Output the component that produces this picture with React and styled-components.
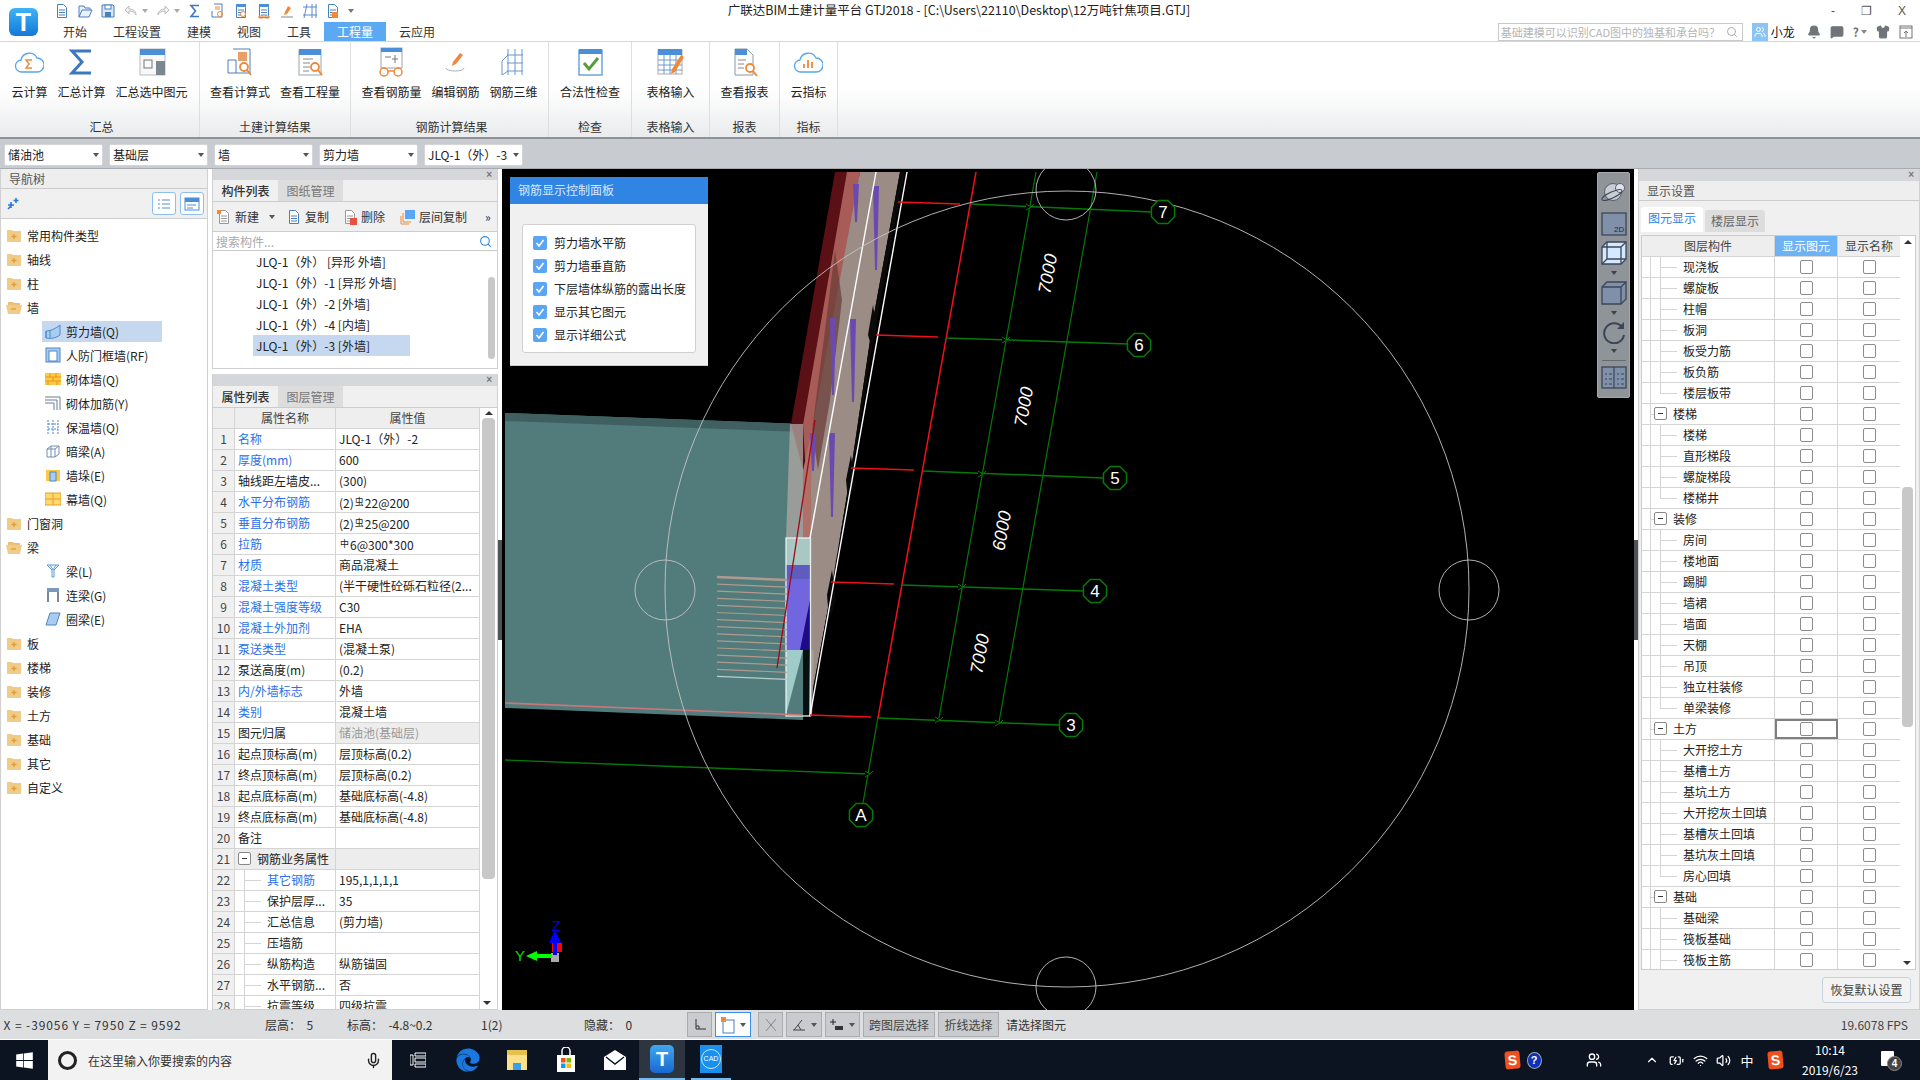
import React from "react";
import styled, { createGlobalStyle } from "styled-components";
import { Bell, Search, Mic, ChevronUp, Volume2, Wifi, BatteryCharging, Shirt, MessageSquare, Users } from "lucide-react";
import { FaEdge, FaWindows } from "react-icons/fa";

const Global = createGlobalStyle`
  html, body { margin: 0; width: 1920px; height: 1080px; overflow: hidden; background: #fff; }
  body { font: 12px "Noto Sans CJK SC", "Noto Sans", sans-serif; color: #222; }
  * { box-sizing: border-box; }
`;

const BLUE = "#4a8fd8";
const ORANGE = "#f0883a";

const Page = styled.div`
  width: 1920px;
  height: 1080px;
  display: flex;
  flex-direction: column;
`;

/* ---------- title + tabs ---------- */
const Header = styled.div`
  height: 42px;
  display: flex;
  border-bottom: 1px solid #d6d6d6;
  position: relative;
`;
const LogoBox = styled.div`
  width: 50px;
  padding: 8px 0 0 9px;
`;
const Logo = styled.div`
  width: 29px;
  height: 28px;
  border-radius: 6px;
  background: linear-gradient(#3fb4f5, #1478d8);
  color: #fff;
  font: bold 25px/28px "Liberation Sans", sans-serif;
  text-align: center;
`;
const HeaderBody = styled.div`
  flex: 1;
  display: flex;
  flex-direction: column;
`;
const TitleRow = styled.div`
  height: 23px;
  display: flex;
  align-items: center;
  position: relative;
  padding-left: 4px;
`;
const QuickIcons = styled.div`
  display: flex;
  align-items: center;
  gap: 7px;
`;
const Title = styled.div`
  position: absolute;
  left: 677px;
  top: 0;
  width: 464px;
  text-align: center;
  font-size: 12.5px;
  white-space: nowrap;
  color: #222;
`;
const WinControls = styled.div`
  margin-left: auto;
  display: flex;
  gap: 26px;
  padding-right: 14px;
  color: #555;
  font: 12px "Liberation Sans", sans-serif;
  align-items: center;
`;
const TabRow = styled.div`
  height: 19px;
  display: flex;
  align-items: stretch;
`;
const Tab = styled.div`
  padding: 0 13px;
  line-height: 19px;
  background: ${p => (p.$active ? "#5ba9f2" : "transparent")};
  color: ${p => (p.$active ? "#fff" : "#333")};
`;
const HelpArea = styled.div`
  margin-left: auto;
  display: flex;
  align-items: center;
  padding-right: 7px;
`;
const SearchBox = styled.div`
  width: 245px;
  height: 18px;
  border: 1px solid #c9c9c9;
  color: #b5b5b5;
  font-size: 11px;
  line-height: 16px;
  padding: 0 4px 0 2px;
  display: flex;
  justify-content: space-between;
  align-items: center;
  white-space: nowrap;
  overflow: hidden;
`;
const Avatar = styled.div`
  width: 16px;
  height: 18px;
  margin-left: 9px;
  background: #8cc4f4;
  display: flex;
  align-items: center;
  justify-content: center;
`;
const UserName = styled.span`
  margin: 0 12px 0 3px;
  color: #111;
`;
const HelpIcons = styled.div`
  display: flex;
  align-items: center;
  gap: 9px;
  color: #707478;
  > span { font-weight: 700; display: flex; align-items: center; }
`;

/* ---------- ribbon ---------- */
const Ribbon = styled.div`
  height: 97px;
  display: flex;
  background: linear-gradient(#fff 0, #fff 50%, #e9ebec 100%);
  border-bottom: 2px solid #8e9195;
`;
const Group = styled.div`
  width: ${p => p.$w}px;
  display: flex;
  flex-direction: column;
  border-right: 1px solid #dcdedf;
  height: 95px;
`;
const GroupButtons = styled.div`
  flex: 1;
  display: flex;
  justify-content: center;
  gap: 10px;
`;
const RibbonBtn = styled.div`
  display: flex;
  flex-direction: column;
  align-items: center;
  padding-top: 5px;
  white-space: nowrap;
  color: #222;
  > svg { height: 30px; margin-bottom: 6px; }
`;
const GroupLabel = styled.div`
  height: 22px;
  line-height: 24px;
  padding-left: ${p => p.$nudge || 0}px;
  text-align: center;
  color: #333;
`;

/* ---------- selector bar ---------- */
const SelectorBar = styled.div`
  height: 30px;
  background: #c8cbcf;
  display: flex;
  align-items: center;
  padding: 2px 0 0 4px;
  gap: 6px;
  border-bottom: 1px solid #a8abaf;
`;
const Select = styled.div`
  width: 99px;
  height: 22px;
  background: #fff;
  border: 1px solid #d5d5d5;
  border-radius: 2px;
  padding: 0 3px;
  line-height: 20px;
  display: flex;
  justify-content: space-between;
  align-items: center;
  white-space: nowrap;
  &::after {
    content: "";
    border: 3px solid transparent;
    border-top: 4px solid #555;
    border-bottom: 0;
  }
`;

/* ---------- main area ---------- */
const Main = styled.div`
  height: 841px;
  display: flex;
  background: #fff;
`;
const Nav = styled.div`
  width: 208px;
  display: flex;
  flex-direction: column;
  border: 1px solid #d0d0d0;
  border-top: 0;
`;
const PaneTitle = styled.div`
  height: 20px;
  background: #eee;
  border-bottom: 1px solid #ccc;
  line-height: 19px;
  padding-left: 8px;
  color: #555;
`;
const NavTools = styled.div`
  height: 30px;
  background: #f0f0f0;
  border-bottom: 1px solid #ccc;
  display: flex;
  align-items: center;
  padding: 0 3px 0 6px;
  gap: 4px;
`;
const ToolTile = styled.div`
  width: 24px;
  height: 23px;
  border: 1px solid #8cc0f0;
  border-radius: 3px;
  background: #fff;
  display: flex;
  align-items: center;
  justify-content: center;
  &:first-of-type { margin-left: auto; }
`;
const Tree = styled.div`
  flex: 1;
  padding-top: 4px;
  background: #fff;
`;
const TreeRow = styled.div`
  height: 24px;
  display: flex;
  align-items: center;
  gap: 5px;
  padding-left: ${p => (p.$child ? 44 : 5)}px;
  white-space: nowrap;
`;
const TreeLabel = styled.span`
  line-height: 21px;
  padding-right: 20px;
`;
const Highlighted = styled.div`
  width: 120px;
  height: 21px;
  margin-left: -3px;
  padding-left: 3px;
  background: #c6d8f0;
  display: flex;
  align-items: center;
  gap: 5px;
`;
const Gutter = styled.div`
  width: 4px;
  background: #fff;
  display: flex;
  flex-direction: column;
  justify-content: center;
  &::after {
    content: "";
    height: 100px;
    background: #4d5359;
  }
`;
const PlainGutter = styled.div`
  width: 4px;
`;
const Middle = styled.div`
  width: 286px;
  display: flex;
  flex-direction: column;
  gap: 5px;
`;
const Pane = styled.div`
  border: 1px solid #d0d0d0;
  border-top: 0;
  display: flex;
  flex-direction: column;
  height: ${p => p.$h}px;
  overflow: hidden;
`;
const CloseBar = styled.div`
  height: ${p => p.$h || 12}px;
  flex: none;
  background: #d5d7da;
  text-align: right;
  padding-right: 5px;
  color: #777;
  font: bold 10px/11px "Liberation Sans", sans-serif;
`;
const TabStrip = styled.div`
  height: 22px;
  flex: none;
  display: flex;
  background: #f0f0f0;
  border-bottom: 1px solid #ccc;
`;
const PaneTab = styled.div`
  width: 65px;
  text-align: center;
  line-height: 21px;
  font-weight: ${p => (p.$active ? 500 : 400)};
  background: ${p => (p.$active ? "#f0f0f0" : "#ddd")};
  color: ${p => (p.$active ? "#333" : "#777")};
`;
const PaneTools = styled.div`
  height: 30px;
  flex: none;
  display: flex;
  align-items: center;
  background: #f0f0f0;
  border-bottom: 1px solid #ccc;
  padding-left: 3px;
  color: #333;
`;
const ToolBtn = styled.div`
  display: flex;
  align-items: center;
  gap: 3px;
  margin-right: ${p => p.$gap}px;
  white-space: nowrap;
`;
const Caret = styled.span`
  border: 3px solid transparent;
  border-top: 4px solid ${p => p.$c || "#555"};
  border-bottom: 0;
  margin-left: ${p => p.$ml || 0}px;
  display: inline-block;
`;
const FindRow = styled.div`
  height: 19px;
  flex: none;
  display: flex;
  justify-content: space-between;
  align-items: center;
  padding: 0 5px 0 3px;
  color: #aaa;
  border-bottom: 1px solid #ccc;
`;
const ListBody = styled.div`
  flex: 1;
  display: flex;
`;
const ListItems = styled.div`
  flex: 1;
  padding: 0 0 0 40px;
`;
const ListItem = styled.div`
  width: 157px;
  height: 21px;
  line-height: 21px;
  padding-left: 3px;
  white-space: pre;
  background: ${p => (p.$sel ? "#c6d8f0" : "transparent")};
`;
const ScrollTrack = styled.div`
  width: ${p => p.$w || 11}px;
  flex: none;
  display: flex;
  flex-direction: column;
  padding: ${p => p.$pt || 0}px 2px 0;
  position: relative;
`;
const ScrollThumb = styled.div`
  width: 100%;
  height: ${p => p.$h}px;
  margin-top: ${p => p.$mt || 0}px;
  background: #c8c8c8;
  border-radius: 4px;
`;
const Arrow = styled.div`
  border: 4px solid transparent;
  margin: 0 auto;
  ${p => (p.$down
    ? "border-top: 4px solid #333; border-bottom: 0; position: absolute; bottom: 4px; left: 3px;"
    : "border-bottom: 4px solid #333; border-top: 0; margin-bottom: 3px;")}
`;
const TableWrap = styled.div`
  flex: 1;
  display: flex;
  overflow: hidden;
`;
const Table = styled.div`
  flex: 1;
  overflow: hidden;
`;
const Row = styled.div`
  display: grid;
  grid-template-columns: ${p => p.$cols};
  height: 21px;
  line-height: 20px;
  border-bottom: 1px solid #d4d4d4;
`;
const HeadCell = styled.div`
  background: ${p => (p.$on ? "#6cb2f5" : "#eee")};
  color: ${p => (p.$on ? "#fff" : "#444")};
  text-align: center;
  border-right: 1px solid #d4d4d4;
`;
const NumCell = styled.div`
  background: #f0f0f0;
  text-align: center;
  color: #444;
  border-right: 1px solid #d4d4d4;
`;
const NameCell = styled.div`
  position: relative;
  padding-left: ${p => p.$pad}px;
  color: ${p => (p.$link ? "#2a6fe8" : "#222")};
  background: ${p => (p.$grey ? "#ededed" : "#fff")};
  border-right: 1px solid #d4d4d4;
  white-space: nowrap;
  overflow: hidden;
`;
const ValueCell = styled.div`
  padding-left: 3px;
  white-space: pre;
  overflow: hidden;
  color: ${p => (p.$dim ? "#999" : "#222")};
  background: ${p => (p.$grey ? "#ededed" : "#fff")};
  border-right: 1px solid #d4d4d4;
`;
const Small = styled.span`
  font-size: 9px;
  vertical-align: 3px;
  margin: 0 1px;
`;
const Guide = styled.span`
  position: absolute;
  left: ${p => p.$x}px;
  top: 0;
  width: 1px;
  height: ${p => (p.$half ? 11 : 21)}px;
  background: #d4d4d4;
`;
const GuideH = styled.span`
  position: absolute;
  left: ${p => p.$x}px;
  top: 10px;
  width: ${p => p.$w}px;
  height: 1px;
  background: #d4d4d4;
`;
const Toggle = styled.span`
  position: absolute;
  left: ${p => p.$x}px;
  top: 3px;
  width: 13px;
  height: 13px;
  border: 1px solid #888;
  border-radius: 2px;
  background: #fff;
  &::after {
    content: "";
    position: absolute;
    left: 3px;
    top: 5px;
    width: 5px;
    height: 1px;
    background: #333;
  }
`;
const Canvas = styled.div`
  width: 1132px;
  background: #000;
  position: relative;
  > svg { display: block; }
`;
const ControlPanel = styled.div`
  position: absolute;
  left: 8px;
  top: 8px;
  width: 198px;
  height: 189px;
  background: #f0f0f0;
  border-bottom: 1px solid #ccc;
`;
const PanelHead = styled.div`
  height: 27px;
  line-height: 26px;
  background: #2f84e4;
  color: #d8e8fa;
  padding-left: 8px;
`;
const PanelInner = styled.div`
  margin: 20px 12px 0;
  height: 129px;
  background: #fff;
  border: 1px solid #d0d0d0;
  border-radius: 3px;
  padding-top: 6px;
`;
const PanelRow = styled.div`
  height: 23px;
  display: flex;
  align-items: center;
  gap: 7px;
  padding-left: 10px;
  white-space: nowrap;
  color: #222;
`;
const CheckOn = styled.span`
  width: 14px;
  height: 14px;
  border-radius: 2px;
  background: #5ba5f5;
  color: #fff;
  display: flex;
  align-items: center;
  justify-content: center;
`;
const ViewTools = styled.div`
  position: absolute;
  left: 1095px;
  top: 3px;
  width: 33px;
  height: 226px;
  background: #8f9499;
  border: 1px solid #a4a8ac;
  border-radius: 2px;
  display: flex;
  flex-direction: column;
  align-items: center;
  padding-top: 7px;
`;
const ViewGap = styled.div`
  height: ${p => p.$h}px;
  flex: none;
`;
const ViewSep = styled.div`
  width: 24px;
  height: 1px;
  background: #666a6e;
  margin: 3px 0 4px;
`;
const ViewCaret = styled.span`
  border: 3px solid transparent;
  border-top: 4px solid #3c4048;
  border-bottom: 0;
  margin: ${p => p.$m || "6px 0"};
`;
const RightPane = styled.div`
  width: 282px;
  border: 1px solid #d0d0d0;
  border-top: 0;
  display: flex;
  flex-direction: column;
  background: #f0f0f0;
`;
const RightTabs = styled.div`
  height: 34px;
  flex: none;
  display: flex;
  align-items: flex-end;
  padding: 0 0 3px 2px;
  gap: 2px;
`;
const RightTab = styled.div`
  width: ${p => (p.$active ? 62 : 60)}px;
  height: ${p => (p.$active ? 25 : 22)}px;
  line-height: 22px;
  text-align: center;
  background: ${p => (p.$active ? "#fff" : "#ddd")};
  color: ${p => (p.$active ? "#2a86e8" : "#666")};
  border-radius: 3px 3px 0 0;
`;
const GridBox = styled.div`
  height: 735px;
  margin: 0 3px 0 2px;
  border: 1px solid #ccc;
  background: #fff;
  display: flex;
  overflow: hidden;
  flex: none;
`;
const CheckCell = styled.div`
  display: flex;
  align-items: center;
  justify-content: center;
  background: #fff;
  border-right: 1px solid #d4d4d4;
  outline: ${p => (p.$focus ? "2px solid #808080" : "none")};
  outline-offset: -2px;
  padding-bottom: 1px;
`;
const CheckOff = styled.span`
  width: 13px;
  height: 14px;
  border: 1px solid #8c8c8c;
  border-radius: 2px;
  display: block;
`;
const RightFoot = styled.div`
  flex: 1;
  display: flex;
  justify-content: flex-end;
  align-items: center;
  padding-right: 8px;
`;
const ResetBtn = styled.div`
  width: 89px;
  height: 26px;
  border: 1px solid #c8d2de;
  border-radius: 3px;
  background: #f3f3f3;
  text-align: center;
  line-height: 24px;
  color: #444;
`;

/* ---------- status bar ---------- */
const Status = styled.div`
  height: 30px;
  background: #dddee0;
  border-bottom: 1px solid #fff;
  display: flex;
  align-items: center;
  color: #333;
  white-space: nowrap;
`;
const StatusCell = styled.div`
  width: ${p => p.$w}px;
  margin-left: ${p => p.$ml || 0}px;
  letter-spacing: ${p => p.$ls || 0}px;
  white-space: pre;
  flex: none;
`;
const StatusBtns = styled.div`
  display: flex;
  gap: 3px;
  align-items: center;
`;
const StatusBtn = styled.div`
  width: ${p => p.$w}px;
  height: 25px;
  margin-left: ${p => p.$ml || 0}px;
  background: ${p => (p.$on ? "#fff" : "#c9cbce")};
  border: 1px solid ${p => (p.$on ? "#3b8fe8" : "#a9abae")};
  display: flex;
  align-items: center;
  justify-content: center;
  gap: 5px;
  color: #444;
`;
const Fps = styled.div`
  margin-left: auto;
  padding-right: 12px;
  color: #444;
`;

/* ---------- taskbar ---------- */
const Taskbar = styled.div`
  height: 40px;
  background: #0b1420;
  display: flex;
  align-items: center;
  color: #fff;
`;
const StartBtn = styled.div`
  width: 48px;
  display: flex;
  justify-content: center;
  color: #fff;
`;
const TaskSearch = styled.div`
  width: 344px;
  height: 40px;
  background: #f2f2f2;
  color: #333;
  display: flex;
  align-items: center;
  padding: 0 10px;
  gap: 11px;
`;
const MicSlot = styled.span`
  margin-left: auto;
  display: flex;
`;
const Ring = styled.span`
  width: 19px;
  height: 19px;
  border: 3px solid #222;
  border-radius: 50%;
`;
const TaskSlot = styled.div`
  width: ${p => p.$w || 49}px;
  height: 40px;
  display: flex;
  align-items: center;
  justify-content: center;
  background: ${p => (p.$active ? "#2c3540" : "transparent")};
  border-bottom: ${p => (p.$open ? "2px solid #76b9ed" : "0")};
`;
const TaskApp = styled.div`
  width: 24px;
  height: 28px;
  border-radius: 5px;
  background: linear-gradient(#3fa8f0, #1868d0);
  color: #fff;
  font: bold 20px/28px "Liberation Sans", sans-serif;
  text-align: center;
`;
const CadApp = styled.div`
  width: 22px;
  height: 28px;
  background: #1890f0;
  display: flex;
  align-items: center;
  justify-content: center;
`;
const CadRing = styled.div`
  width: 20px;
  height: 20px;
  border: 1px solid #cfe8ff;
  border-radius: 50%;
  color: #fff;
  font: 7px/18px "Liberation Sans", sans-serif;
  text-align: center;
`;
const Tray = styled.div`
  margin-left: auto;
  display: flex;
  align-items: center;
  height: 40px;
`;
const TrayItem = styled.div`
  width: ${p => p.$w}px;
  margin-left: ${p => p.$ml || 0}px;
  display: flex;
  justify-content: center;
  align-items: center;
  font-size: ${p => p.$fs || 12}px;
`;
const Sogou = styled.span`
  width: 15px;
  height: 18px;
  border-radius: 3px;
  background: #f0501e;
  color: #fff;
  font: bold 14px/18px "Liberation Sans", sans-serif;
  text-align: center;
  transform: rotate(-5deg);
`;
const HelpDot = styled.span`
  width: 15px;
  height: 17px;
  border-radius: 50%;
  background: #1030b8;
  border: 1px solid #9aa;
  color: #fff;
  font: bold 11px/15px "Liberation Sans", sans-serif;
  text-align: center;
`;
const Clock = styled.div`
  width: 76px;
  text-align: center;
  line-height: 20px;
  font-size: 12px;
`;
const Badge = styled.span`
  position: absolute;
  right: -8px;
  bottom: -5px;
  width: 15px;
  height: 15px;
  border-radius: 50%;
  background: #444;
  border: 1px solid #888;
  color: #fff;
  font: bold 10px/13px "Liberation Sans", sans-serif;
  text-align: center;
`;
const Notice = styled.div`
  position: relative;
  width: 13px;
  height: 15px;
  background: #fff;
  margin: 0 26px 4px 0;
  border-radius: 1px;
`;

/* ---------- icons ---------- */
const Svg = ({ w = 16, h = 16, children }) => (
  <svg width={w} height={h} viewBox={`0 0 ${w} ${h}`} fill="none">{children}</svg>
);

const Doc = ({ c = "#4a7fb8", head }) => (
  <>
    <path d="M3.5 1.5h6l3 3v10h-9z" stroke={c} fill="#fff" />
    {head && <rect x="3" y="1" width="10" height="3" fill={BLUE} />}
    <path d="M5 7h6M5 9.5h6M5 12h6" stroke={c} />
  </>
);
const qaIcons = [
  <Svg key="a"><Doc /></Svg>,
  <Svg key="b"><path d="M2 14V3h5l1 2h5v2M2 14l3-7h10l-3 7z" stroke="#4a7fb8" fill="#eaf2fa" /></Svg>,
  <Svg key="c"><path d="M2 2h11l1 1v11H2z" stroke="#4a7fb8" fill="#d8e8f6" /><rect x="5" y="2" width="6" height="4" fill="#fff" stroke="#4a7fb8" /><rect x="5" y="9" width="6" height="5" fill="#4a7fb8" /></Svg>,
  <Svg key="d"><path d="M13 12c0-4-3-6-7-6V3L2 7l4 4V8c3 0 6 1 7 4z" stroke="#bbb" fill="#f2f2f2" /></Svg>,
  <Caret key="d2" $c="#aaa" $ml={-4} />,
  <Svg key="e"><path d="M3 12c0-4 3-6 7-6V3l4 4-4 4V8c-3 0-6 1-7 4z" stroke="#bbb" fill="#f2f2f2" /></Svg>,
  <Caret key="e2" $c="#aaa" $ml={-4} />,
  <Svg key="f"><path d="M12 2.500H4l4.500 5.500L4 13.500h8" stroke="#3b78c0" strokeWidth="1.6" /></Svg>,
  <Svg key="g"><path d="M4 1h8v13H2" stroke="#4a7fb8" /><path d="M5 4h5M5 6h5" stroke={ORANGE} /><circle cx="10" cy="11" r="2.500" stroke={ORANGE} /><path d="M2 8v6" stroke="#4a7fb8" /></Svg>,
  <Svg key="h"><Doc head /><circle cx="10" cy="11" r="2.500" stroke={ORANGE} fill="#fff" /></Svg>,
  <Svg key="i"><Doc head /><path d="M3 13h4v2H3zM9 13h4v2H9z" stroke={ORANGE} /></Svg>,
  <Svg key="j"><path d="M9 3l3 2-4 6-3 1 1-3z" fill={ORANGE} /><path d="M2 14h12" stroke="#888" /></Svg>,
  <Svg key="k"><path d="M1 4h14M1 12h14M5 1l-3 14M10 1v14M14 1v14" stroke="#5a8cc8" /></Svg>,
  <Svg key="l"><Doc /><rect x="7" y="9" width="6" height="6" fill={ORANGE} /></Svg>,
  <Caret key="l2" $c="#777" />,
];

const RI = ({ children }) => <svg width="30" height="30" viewBox="0 0 30 30" fill="none">{children}</svg>;
const Cloud = () => <path d="M8 25a6 6 0 0 1-1-12 8.500 8.500 0 0 1 16-2 7 7 0 0 1 0 14z" stroke="#58a6ea" strokeWidth="1.3" fill="#fff" />;
const HeadDoc = () => (
  <>
    <rect x="4" y="3" width="22" height="25" stroke="#9aa4ae" fill="#fff" />
    <rect x="4" y="2" width="22" height="6" fill={BLUE} />
  </>
);
const Lens = ({ x = 21, y = 21 }) => (
  <>
    <circle cx={x} cy={y} r="4" stroke={ORANGE} strokeWidth="1.8" fill="#fff" />
    <path d={`M${x + 3} ${y + 3}l4 5`} stroke={ORANGE} strokeWidth="2" />
  </>
);
const ribbonIcons = {
  cloudSum: <RI><Cloud /><path d="M18 13h-6l3 4-3 4h6" stroke={ORANGE} strokeWidth="1.4" /></RI>,
  sigma: <RI><path d="M25 4H6l10 11L6 26h19" stroke="#3b78c0" strokeWidth="3" /></RI>,
  sumSel: <RI><rect x="3" y="2" width="25" height="26" stroke="#bbb" fill="#f8f8f8" /><rect x="3" y="2" width="25" height="6" fill={BLUE} /><rect x="7" y="13" width="8" height="8" stroke="#777" /><rect x="19" y="14" width="9" height="14" fill="#7c8690" /></RI>,
  calcDoc: <RI><path d="M8 2h17v24H3V13h8v13" stroke="#4a7fb8" /><rect x="13" y="5" width="9" height="9" fill="#e8a068" /><Lens x={19} y={20} /></RI>,
  qtyDoc: <RI><HeadDoc /><path d="M8 12h10M8 16h7M8 20h7M8 24h6" stroke="#888" /><Lens x={20} y={20} /></RI>,
  rebar: <RI><rect x="5" y="1" width="21" height="20" stroke="#9aa4ae" fill="#fff" /><rect x="5" y="1" width="21" height="4" fill={BLUE} /><path d="M9 10h6M19 8v8M16 12h6" stroke="#777" /><circle cx="8" cy="25" r="4" stroke={ORANGE} strokeWidth="1.5" /><circle cx="22" cy="25" r="4" stroke={ORANGE} strokeWidth="1.5" /><path d="M12 24h6" stroke={ORANGE} strokeWidth="1.5" /></RI>,
  editBar: <RI><path d="M6 21c0 4 18 4 18 0" stroke="#b0b0b0" /><path d="M20 6l3 2-7 9-4 2 1-4z" fill={ORANGE} /></RI>,
  rebar3d: <RI><path d="M9 2v26M16 2v26M23 2v26M8 8h16M8 16h16M8 24h16M3 14l6-6M3 28l6-4M3 14v14" stroke="#6b96c8" /></RI>,
  check: <RI><rect x="4" y="3" width="23" height="25" stroke={BLUE} strokeWidth="1.2" fill="#fff" /><rect x="4" y="2" width="23" height="5" fill={BLUE} /><path d="M9 16l5 6 9-11" stroke="#5a9a40" strokeWidth="3" /></RI>,
  sheet: <RI><rect x="3" y="3" width="24" height="24" stroke="#aaa" fill="#fff" /><rect x="3" y="2" width="24" height="6" fill={BLUE} /><path d="M3 13h24M3 18h24M3 23h24M9 8v19M15 8v19M21 8v19" stroke="#6a9ad0" /><path d="M26 8l3 2-9 15-4 2 1-5z" fill={ORANGE} /></RI>,
  report: <RI><path d="M6 2h12l6 6v20H6z" stroke="#8a98a8" fill="#fff" /><path d="M6 2h12v6H6z" fill={BLUE} /><path d="M9 13h8M9 17h6M9 21h6" stroke="#888" /><Lens x={21} y={21} /></RI>,
  cloudBar: <RI><Cloud /><path d="M11 21v-4M15 21v-8M19 21v-6" stroke={ORANGE} strokeWidth="1.8" /></RI>,
};

const I = ({ children }) => <svg width="16" height="16" viewBox="0 0 16 16" fill="none">{children}</svg>;
const FolderClosed = () => <I><path d="M1 3h5l1 1h8v11H1z" fill="#f0cc88" /><path d="M8 7v5M5.500 9.500h5" stroke="#d8a040" strokeWidth="1.4" /></I>;
const FolderOpen = () => <I><path d="M2 3h5l1 1h6v2H2z" fill="#e8c078" /><path d="M0 6h16l-2 9H2z" fill="#f0cc88" /><path d="M5 10h5" stroke="#d8a040" strokeWidth="1.4" /></I>;
const navIcons = {
  shear: <I><path d="M1 8c4 0 9-2 14-6v10c-4 3-9 4-14 3z" fill="#a8cdf0" stroke="#4a88c8" /><path d="M1 8v7M5 7v8" stroke="#4a88c8" /></I>,
  door: <I><rect x="1" y="1" width="14" height="14" fill="#a8cdf0" stroke="#4a88c8" /><rect x="4" y="4" width="8" height="10" fill="#fff" stroke="#4a88c8" /></I>,
  brick: <I><rect x="0" y="2" width="16" height="12" fill="#fdc848" /><path d="M0 6h16M0 10h16M5 2v4M11 2v4M8 6v4M3 10v4M12 10v4" stroke="#e89810" /></I>,
  rein: <I><path d="M0 2h15v13M0 5h12v10M0 8h9v7" stroke="#6a7f98" /></I>,
  insul: <I><path d="M3 1v14M8 1v14M13 1v14" stroke="#4a88c8" strokeDasharray="2 1" /><path d="M3 5h10M3 10h10" stroke="#4a88c8" strokeDasharray="2 1" /></I>,
  dark: <I><path d="M2 6l4-3h8v8l-4 3H2zM2 6h8v8M10 6l4-3M6 3v11" stroke="#7090b0" /></I>,
  pier: <I><rect x="1" y="3" width="14" height="11" fill="#fdc848" /><rect x="5" y="5" width="6" height="9" fill="#a8cdf0" stroke="#4a88c8" /></I>,
  curtain: <I><rect x="0" y="2" width="16" height="12" fill="#fdd870" stroke="#e8a020" /><path d="M0 8h16M8 2v12" stroke="#e8a020" /></I>,
  beam: <I><path d="M2 2h12l-5 5v7H7V7z" stroke="#5a9ad8" /><path d="M5 2l3 5 3-5" stroke="#5a9ad8" /></I>,
  link: <I><rect x="2" y="1" width="12" height="4" fill="#7a9ab8" /><path d="M3 5v10M13 5v10" stroke="#7a8a98" strokeWidth="2" /></I>,
  ring: <I><path d="M5 2h10l-4 12H1z" fill="#a8cdf0" stroke="#4a88c8" /></I>,
};

const navTree = [
  { t: "常用构件类型" }, { t: "轴线" }, { t: "柱" }, { t: "墙", open: true },
  { t: "剪力墙(Q)", i: "shear", sel: true }, { t: "人防门框墙(RF)", i: "door" }, { t: "砌体墙(Q)", i: "brick" },
  { t: "砌体加筋(Y)", i: "rein" }, { t: "保温墙(Q)", i: "insul" }, { t: "暗梁(A)", i: "dark" },
  { t: "墙垛(E)", i: "pier" }, { t: "幕墙(Q)", i: "curtain" }, { t: "门窗洞" }, { t: "梁", open: true },
  { t: "梁(L)", i: "beam" }, { t: "连梁(G)", i: "link" }, { t: "圈梁(E)", i: "ring" },
  { t: "板" }, { t: "楼梯" }, { t: "装修" }, { t: "土方" }, { t: "基础" }, { t: "其它" }, { t: "自定义" },
];

const listItems = [
  "JLQ-1（外） [异形 外墙]", "JLQ-1（外）-1 [异形 外墙]", "JLQ-1（外）-2 [外墙]", "JLQ-1（外）-4 [内墙]", "JLQ-1（外）-3 [外墙]",
];

const Bar = ({ g, v }) => <>({g})<Small>虫</Small>{v}</>;
const props = [
  ["名称", 1, "JLQ-1（外）-2"], ["厚度(mm)", 1, "600"], ["轴线距左墙皮...", 0, "(300)"],
  ["水平分布钢筋", 1, <Bar g="2" v="22@200" />], ["垂直分布钢筋", 1, <Bar g="2" v="25@200" />],
  ["拉筋", 1, <><Small>中</Small>6@300*300</>], ["材质", 1, "商品混凝土"], ["混凝土类型", 1, "(半干硬性砼砾石粒径(2..."],
  ["混凝土强度等级", 1, "C30"], ["混凝土外加剂", 1, "EHA"], ["泵送类型", 1, "(混凝土泵)"], ["泵送高度(m)", 0, "(0.2)"],
  ["内/外墙标志", 1, "外墙"], ["类别", 1, "混凝土墙"], ["图元归属", 0, "储油池(基础层)", "dim"],
  ["起点顶标高(m)", 0, "层顶标高(0.2)"], ["终点顶标高(m)", 0, "层顶标高(0.2)"],
  ["起点底标高(m)", 0, "基础底标高(-4.8)"], ["终点底标高(m)", 0, "基础底标高(-4.8)"], ["备注", 0, ""],
  ["钢筋业务属性", 0, "", "group"], ["其它钢筋", 1, "195,1,1,1,1", "child"], ["保护层厚...", 0, "35", "child"],
  ["汇总信息", 0, "(剪力墙)", "child"], ["压墙筋", 0, "", "child"], ["纵筋构造", 0, "纵筋锚固", "child"],
  ["水平钢筋...", 0, "否", "child"], ["抗震等级", 0, "四级抗震", "child"],
];

const PROP_COLS = "22px 101px 1fr";
const LAYER_COLS = "133px 63px 63px";

const layers = [
  ["现浇板"], ["螺旋板"], ["柱帽"], ["板洞"], ["板受力筋"], ["板负筋"], ["楼层板带", "last"],
  ["楼梯", "parent"], ["楼梯"], ["直形梯段"], ["螺旋梯段"], ["楼梯井", "last"],
  ["装修", "parent"], ["房间"], ["楼地面"], ["踢脚"], ["墙裙"], ["墙面"], ["天棚"], ["吊顶"], ["独立柱装修"], ["单梁装修", "last"],
  ["土方", "parent"], ["大开挖土方"], ["基槽土方"], ["基坑土方"], ["大开挖灰土回填"], ["基槽灰土回填"], ["基坑灰土回填"], ["房心回填", "last"],
  ["基础", "parent"], ["基础梁"], ["筏板基础"], ["筏板主筋"],
];

const ribbon = [
  { w: 200, label: "汇总", nudge: 4, items: [["云计算", "cloudSum"], ["汇总计算", "sigma"], ["汇总选中图元", "sumSel"]] },
  { w: 151, label: "土建计算结果", items: [["查看计算式", "calcDoc"], ["查看工程量", "qtyDoc"]] },
  { w: 198, label: "钢筋计算结果", nudge: 4, items: [["查看钢筋量", "rebar"], ["编辑钢筋", "editBar"], ["钢筋三维", "rebar3d"]] },
  { w: 83, label: "检查", items: [["合法性检查", "check"]] },
  { w: 78, label: "表格输入", items: [["表格输入", "sheet"]] },
  { w: 70, label: "报表", items: [["查看报表", "report"]] },
  { w: 58, label: "指标", items: [["云指标", "cloudBar"]] },
];

/* ---------- canvas drawing, in page coordinates ---------- */
const GREEN = "#067a06";
const RED = "#f01018";
const CIRCLE = "#c4c4c4";
const hatchYs = Array.from({ length: 15 }, (_, i) => 577 + i * 7.1);

const Octo = ({ x, y, t }) => {
  const pts = Array.from({ length: 8 }, (_, i) => {
    const a = Math.PI / 8 + (i * Math.PI) / 4;
    return `${x + 12.5 * Math.cos(a)},${y + 12.5 * Math.sin(a)}`;
  }).join(" ");
  return (
    <>
      <polygon points={pts} fill="#000" stroke={GREEN} strokeWidth="1.5" />
      <text x={x} y={y + 6} textAnchor="middle" fill="#fff" fontSize="17" fontFamily="Liberation Sans">{t}</text>
    </>
  );
};
const Dim = ({ x, y, t }) => (
  <text x={x} y={y} transform={`rotate(-80 ${x} ${y})`} textAnchor="middle" fill="#fff" fontSize="18" fontStyle="italic" fontFamily="Liberation Sans" dominantBaseline="middle">{t}</text>
);
const L = ({ p, c, w = 1.2 }) => <line x1={p[0]} y1={p[1]} x2={p[2]} y2={p[3]} stroke={c} strokeWidth={w} />;

const Drawing = () => (
  <svg width="1132" height="841" viewBox="502 169 1132 841">
    {/* slab */}
    <polygon points="505,413 803,424 803,720 505,708" fill="#527b7b" />
    <polygon points="505,413 803,424 803,432 505,421" fill="#3f5f60" />
    {/* wall */}
    <polygon points="835,172 791,424 803,470 856,172" fill="#5a1014" />
    <polygon points="847,172 803,425 810,540 860,172" fill="#a85c58" />
    <polygon points="860,172 900,172 873,320 851,470 832,586 808,716 804,700 810,540 812,430 836,300" fill="#9c8c86" />
    <polygon points="900,172 905,172 875,330 851,480 836,560 812,716 808,716 832,586 851,470 873,320" fill="#0a0a0a" />
    <polygon points="873,305 877,330 871,345 868,335" fill="#0a0a0a" />
    <polygon points="851,455 855,485 848,500 846,480" fill="#0a0a0a" />
    <polygon points="832,570 836,600 829,620 827,595" fill="#0a0a0a" />
    <polygon points="790,424 803,424 803,540 786,540" fill="#b0a8a4" opacity="0.75" />
    <polygon points="803,470 812,430 810,540 803,540" fill="#b07068" />
    <polygon points="825,330 835,250 842,300 830,400 818,470 812,430" fill="#6a3a34" opacity="0.7" />
    {[[876, 186, 270], [856, 184, 222], [853, 319, 402], [833, 318, 395], [832, 433, 517], [813, 433, 471]].map(([x, y1, y2]) => (
      <polygon key={x + y1} points={`${x - 3},${y1} ${x + 3},${y1} ${x + 1},${y2} ${x - 1},${y2}`} fill="#6a4ab0" />
    ))}
    {/* end box */}
    <rect x="786" y="538" width="24" height="27" fill="#a9c8c4" />
    <rect x="785" y="565" width="25" height="14" fill="#5f5cc0" />
    <rect x="785" y="579" width="25" height="71" fill="#7265e0" />
    <polygon points="810,600 810,650 800,650" fill="#1c0a88" />
    <polygon points="786,650 803,650 786,715" fill="#9fcbc8" />
    <rect x="803" y="650" width="7" height="66" fill="#06100f" />
    <polygon points="810,650 814,650 812,716 809,716" fill="#a89c96" />
    <rect x="786" y="538" width="24.5" height="178" stroke="#e8f0f0" strokeWidth="1.3" fill="none" />
    {/* hatch */}
    {hatchYs.map((y, i) => (
      <line key={y} x1="717" y1={y} x2="787" y2={y + 3} stroke={i === 14 ? "#b8d0cc" : "#b09a90"} strokeWidth={i === 0 ? 2.4 : 1.2} />
    ))}
    <L p={[505, 703, 802, 715]} c="#c8787a" w={1.6} />
    <L p={[815, 420, 777, 668]} c="#a00818" w={1.3} />
    <L p={[876, 172, 810, 538]} c="#fff" w={1.4} />
    <L p={[907, 172, 810, 716]} c="#fff" w={1.4} />
    {/* grid */}
    <L p={[976, 172, 878, 718]} c={RED} w={1.5} />
    <L p={[878, 717, 863, 803]} c={GREEN} />
    <L p={[1036, 172, 939, 718]} c={GREEN} />
    <L p={[1097, 172, 999, 722]} c={GREEN} />
    <L p={[971, 204, 1152, 212]} c={GREEN} w={1.5} />
    <L p={[946, 338, 1128, 344]} c={GREEN} w={1.5} />
    <L p={[923, 471, 1103, 478]} c={GREEN} w={1.5} />
    <L p={[902, 585, 1084, 591]} c={GREEN} w={1.5} />
    <L p={[878, 718, 1060, 725]} c={GREEN} w={1.5} />
    <L p={[505, 760, 868, 774]} c={GREEN} w={1.4} />
    <L p={[898, 202, 960, 204]} c={RED} w={1.6} />
    <L p={[876, 335, 938, 337]} c={RED} w={1.6} />
    <L p={[851, 468, 914, 470]} c={RED} w={1.6} />
    <L p={[831, 582, 894, 584]} c={RED} w={1.6} />
    <L p={[810, 715, 871, 717]} c={RED} w={1.6} />
    {[[1030, 207], [1006, 340], [982, 474], [962, 587], [939, 720], [999, 723], [869, 774]].map(([x, y]) => (
      <path key={x} d={`M${x - 4} ${y - 3}l5 3l-5 3M${x + 4} ${y - 3}l-3 3`} stroke={GREEN} strokeWidth="1" />
    ))}
    {/* circles */}
    <ellipse cx="1067" cy="589" rx="402" ry="398" stroke={CIRCLE} strokeWidth="0.9" fill="none" />
    <circle cx="665" cy="590" r="30" stroke={CIRCLE} strokeWidth="0.9" fill="none" />
    <circle cx="1469" cy="590" r="30" stroke={CIRCLE} strokeWidth="0.9" fill="none" />
    <circle cx="1066" cy="190" r="30" stroke={CIRCLE} strokeWidth="0.9" fill="none" />
    <circle cx="1066" cy="987" r="30" stroke={CIRCLE} strokeWidth="0.9" fill="none" />
    <Dim x={1049} y={274} t="7000" />
    <Dim x={1025} y={407} t="7000" />
    <Dim x={1003} y={531} t="6000" />
    <Dim x={981} y={654} t="7000" />
    <Octo x={1163} y={212} t="7" />
    <Octo x={1139} y={345} t="6" />
    <Octo x={1115} y={478} t="5" />
    <Octo x={1095} y={591} t="4" />
    <Octo x={1071} y={725} t="3" />
    <Octo x={861} y={815} t="A" />
    {/* axis */}
    <rect x="552" y="943" width="10" height="9" fill="#f00" />
    <rect x="551" y="953" width="8" height="9" fill="#aaa" />
    <polygon points="555,930 561,943 557,943 557,955 553,955 553,943 549,943" fill="#00f" />
    <polygon points="526,956 537,951 537,954 552,954 552,958 537,958 537,961" fill="#0f0" />
    <text x="552" y="931" fill="#0000ee" fontSize="14" fontFamily="Liberation Sans">Z</text>
    <text x="515" y="961" fill="#00e000" fontSize="15" fontFamily="Liberation Sans">Y</text>
  </svg>
);

const VI = ({ h = 24, children }) => <svg width="26" height={h} viewBox={`0 0 26 ${h}`} fill="none">{children}</svg>;
const S = "#3c4658";
const CubeFill = "#7f90a8";

export default function App() {
  return (
    <Page>
      <Global />
      <Header>
        <LogoBox><Logo>T</Logo></LogoBox>
        <HeaderBody>
          <TitleRow>
            <QuickIcons>{qaIcons}</QuickIcons>
            <Title>广联达BIM土建计量平台 GTJ2018 - [C:\Users\22110\Desktop\12万吨针焦项目.GTJ]</Title>
            <WinControls><span>-</span><span>❐</span><span>X</span></WinControls>
          </TitleRow>
          <TabRow>
            {["开始", "工程设置", "建模", "视图", "工具", "工程量", "云应用"].map(t => (
              <Tab key={t} $active={t === "工程量"}>{t}</Tab>
            ))}
            <HelpArea>
              <SearchBox>基础建模可以识别CAD图中的独基和承台吗？<Search size={12} color="#aaa" /></SearchBox>
              <Avatar><Users size={12} color="#fff" /></Avatar>
              <UserName>小龙</UserName>
              <HelpIcons>
                <Bell size={14} fill="#707478" />
                <MessageSquare size={14} fill="#707478" />
                <span>?<Caret $ml={2} $c="#888" /></span>
                <Shirt size={14} fill="#707478" />
                <Svg w={14} h={14}><rect x="1" y="1" width="12" height="12" stroke="#707478" /><path d="M1 3h12M7 12V6M5 8l2-2 2 2" stroke="#707478" /></Svg>
              </HelpIcons>
            </HelpArea>
          </TabRow>
        </HeaderBody>
      </Header>

      <Ribbon>
        {ribbon.map(g => (
          <Group key={g.label + g.w} $w={g.w}>
            <GroupButtons>
              {g.items.map(([t, i]) => (
                <RibbonBtn key={t}>{ribbonIcons[i]}{t}</RibbonBtn>
              ))}
            </GroupButtons>
            <GroupLabel $nudge={g.nudge}>{g.label}</GroupLabel>
          </Group>
        ))}
      </Ribbon>

      <SelectorBar>
        <Select>储油池</Select>
        <Select>基础层</Select>
        <Select>墙</Select>
        <Select>剪力墙</Select>
        <Select>JLQ-1（外）-3</Select>
      </SelectorBar>

      <Main>
        <Nav>
          <PaneTitle>导航树</PaneTitle>
          <NavTools>
            <Svg w={14} h={14}><path d="M1 12l4-4M4 11V5M1 8h6M9 6V1M6.500 3.500h5" stroke="#2a78d8" strokeWidth="1.6" /></Svg>
            <ToolTile><Svg><path d="M2 4h2M6 4h8M2 8h2M6 8h8M2 12h2M6 12h8" stroke="#4a8fd8" /></Svg></ToolTile>
            <ToolTile><Svg><rect x="1" y="2" width="14" height="12" stroke="#4a8fd8" /><rect x="1" y="2" width="14" height="4" fill="#4a8fd8" /><path d="M3 9h9M3 12h6" stroke="#4a8fd8" /></Svg></ToolTile>
          </NavTools>
          <Tree>
            {navTree.map(n => (
              <TreeRow key={n.t} $child={!!n.i}>
                {n.i ? (
                  n.sel ? (
                    <Highlighted>{navIcons[n.i]}{n.t}</Highlighted>
                  ) : (
                    <>{navIcons[n.i]}<TreeLabel>{n.t}</TreeLabel></>
                  )
                ) : (
                  <>{n.open ? <FolderOpen /> : <FolderClosed />}<TreeLabel>{n.t}</TreeLabel></>
                )}
              </TreeRow>
            ))}
          </Tree>
        </Nav>
        <PlainGutter />
        <Middle>
          <Pane $h={200}>
            <CloseBar $h={11}>×</CloseBar>
            <TabStrip>
              <PaneTab $active>构件列表</PaneTab>
              <PaneTab>图纸管理</PaneTab>
            </TabStrip>
            <PaneTools>
              <ToolBtn $gap={11}>
                <Svg><Doc c="#999" /><rect x="1" y="1" width="4" height="4" fill={ORANGE} /></Svg>
                新建<Caret $ml={7} />
              </ToolBtn>
              <ToolBtn $gap={13}><Svg><Doc /></Svg>复制</ToolBtn>
              <ToolBtn $gap={15}><Svg><Doc c="#999" /><rect x="8" y="9" width="7" height="7" fill="#e85040" /></Svg>删除</ToolBtn>
              <ToolBtn $gap={18}><Svg><rect x="5" y="1" width="10" height="9" fill="#5ba5f5" /><path d="M3 4v9h8M1 7v8h8" stroke={ORANGE} /></Svg>层间复制</ToolBtn>
              <span>»</span>
            </PaneTools>
            <FindRow>搜索构件...<Search size={13} color="#2a86e8" /></FindRow>
            <ListBody>
              <ListItems>
                {listItems.map((t, i) => <ListItem key={t} $sel={i === 4}>{t}</ListItem>)}
              </ListItems>
              <ScrollTrack $pt={26}><ScrollThumb $h={82} /></ScrollTrack>
            </ListBody>
          </Pane>
          <Pane $h={636}>
            <CloseBar>×</CloseBar>
            <TabStrip>
              <PaneTab $active>属性列表</PaneTab>
              <PaneTab>图层管理</PaneTab>
            </TabStrip>
            <TableWrap>
              <Table>
                <Row $cols={PROP_COLS}>
                  <HeadCell /><HeadCell>属性名称</HeadCell><HeadCell>属性值</HeadCell>
                </Row>
                {props.map(([name, link, val, kind], i) => (
                  <Row key={name} $cols={PROP_COLS}>
                    <NumCell>{i + 1}</NumCell>
                    <NameCell $link={!!link} $grey={kind === "group"} $pad={kind === "child" ? 32 : kind === "group" ? 22 : 3}>
                      {kind === "child" && <Guide $x={9} />}
                      {kind === "child" && <GuideH $x={9} $w={17} />}
                      {kind === "group" && <Toggle $x={3} />}
                      {name}
                    </NameCell>
                    <ValueCell $grey={kind === "dim" || kind === "group"} $dim={kind === "dim"}>{val}</ValueCell>
                  </Row>
                ))}
              </Table>
              <ScrollTrack $w={17} $pt={3}>
                <Arrow />
                <ScrollThumb $h={461} />
                <Arrow $down />
              </ScrollTrack>
            </TableWrap>
          </Pane>
        </Middle>
        <Gutter />
        <Canvas>
          <Drawing />
          <ControlPanel>
            <PanelHead>钢筋显示控制面板</PanelHead>
            <PanelInner>
              {["剪力墙水平筋", "剪力墙垂直筋", "下层墙体纵筋的露出长度", "显示其它图元", "显示详细公式"].map(t => (
                <PanelRow key={t}>
                  <CheckOn><Svg w={10} h={10}><path d="M1.500 5l2.500 3 4.500-6" stroke="#fff" strokeWidth="1.6" /></Svg></CheckOn>
                  {t}
                </PanelRow>
              ))}
            </PanelInner>
          </ControlPanel>
          <ViewTools>
            <VI h={24}>
              <circle cx="12" cy="12" r="8.500" fill="#c8ccd4" stroke="#5a6068" />
              <circle cx="19" cy="8" r="4.500" fill="#e0e4ea" stroke="#5a6068" />
              <ellipse cx="11" cy="15" rx="11" ry="3" transform="rotate(-25 11 15)" stroke="#3c4658" />
            </VI>
            <ViewGap $h={8} />
            <VI h={24}>
              <rect x="1" y="1" width="24" height="22" fill={CubeFill} stroke={S} strokeWidth="1.3" />
              <text x="13" y="20" fontSize="8" fill="#222b38" fontFamily="Liberation Sans">2D</text>
            </VI>
            <ViewGap $h={5} />
            <VI h={24}>
              <path d="M1 6l5-5h19v17l-5 5H1z" fill="#d4e8ff" stroke={S} strokeWidth="1.3" />
              <path d="M6 1v17h19M6 18l-5 5" stroke={S} strokeWidth="1.3" />
              <path d="M1 6h19v17M20 6l5-5" stroke={S} strokeWidth="1.3" />
            </VI>
            <ViewCaret />
            <VI h={24}>
              <path d="M1 6l5-5h19v17l-5 5H1z" fill={CubeFill} stroke={S} strokeWidth="1.3" />
              <path d="M1 6h19v17M20 6l5-5" stroke={S} strokeWidth="1.3" />
            </VI>
            <ViewCaret />
            <VI h={23}>
              <path d="M21 6a10 10 0 1 0 2 8" stroke={S} strokeWidth="2" />
              <path d="M23 1v7h-7z" fill={S} />
            </VI>
            <ViewCaret $m="5px 0 4px" />
            <ViewSep />
            <VI h={24}>
              <rect x="1" y="2" width="24" height="21" fill={CubeFill} stroke={S} strokeWidth="1.3" />
              <path d="M13 2v21M4 9h2M4 14h2M4 19h2M8 9h3M8 14h3M8 19h3M16 9h2M16 14h2M16 19h2M20 9h3M20 14h3M20 19h3" stroke={S} strokeWidth="1.2" />
            </VI>
          </ViewTools>
        </Canvas>
        <Gutter />
        <RightPane>
          <CloseBar>×</CloseBar>
          <PaneTitle>显示设置</PaneTitle>
          <RightTabs>
            <RightTab $active>图元显示</RightTab>
            <RightTab>楼层显示</RightTab>
          </RightTabs>
          <GridBox>
            <Table>
              <Row $cols={LAYER_COLS}>
                <HeadCell>图层构件</HeadCell>
                <HeadCell $on>显示图元</HeadCell>
                <HeadCell>显示名称</HeadCell>
              </Row>
              {layers.map(([name, kind], i) => (
                <Row key={name + i} $cols={LAYER_COLS}>
                  <NameCell $pad={kind === "parent" ? 31 : 41}>
                    <Guide $x={8} />
                    {kind === "parent" ? (
                      <><GuideH $x={8} $w={5} /><Toggle $x={12} /></>
                    ) : (
                      <><Guide $x={18} $half={kind === "last"} /><GuideH $x={18} $w={17} /></>
                    )}
                    {name}
                  </NameCell>
                  <CheckCell $focus={name === "土方"}><CheckOff /></CheckCell>
                  <CheckCell><CheckOff /></CheckCell>
                </Row>
              ))}
            </Table>
            <ScrollTrack $w={15} $pt={4}>
              <Arrow />
              <ScrollThumb $h={240} $mt={240} />
              <Arrow $down />
            </ScrollTrack>
          </GridBox>
          <RightFoot><ResetBtn>恢复默认设置</ResetBtn></RightFoot>
        </RightPane>
      </Main>

      <Status>
        <StatusCell $w={265} $ls={0.9}> X = -39056 Y = 7950 Z = 9592</StatusCell>
        <StatusCell $w={82}>层高：  5</StatusCell>
        <StatusCell $w={134}>标高：  -4.8~0.2</StatusCell>
        <StatusCell $w={103}>1(2)</StatusCell>
        <StatusCell $w={103}>隐藏：  0</StatusCell>
        <StatusBtns>
          <StatusBtn $w={25}><Svg w={14} h={14}><path d="M3 1v10h10M3 8h3v3" stroke="#333" /></Svg></StatusBtn>
          <StatusBtn $w={36} $on><Svg w={14} h={18}><rect x="2" y="4" width="11" height="13" stroke="#4a7fb8" /><rect x="0" y="1" width="5" height="5" fill={ORANGE} /></Svg><Caret /></StatusBtn>
          <StatusBtn $w={25} $ml={4}><Svg w={14} h={14}><path d="M2 1l10 12M12 1L2 13" stroke="#888" /></Svg></StatusBtn>
          <StatusBtn $w={36}><Svg w={14} h={14}><path d="M1 12h12M2 12l8-10M6 7l3 5" stroke="#444" /></Svg><Caret /></StatusBtn>
          <StatusBtn $w={35}><Svg w={14} h={14}><path d="M3 1v6M0 4h6" stroke="#222" /><rect x="5" y="8" width="8" height="4" fill="#333" /></Svg><Caret /></StatusBtn>
          <StatusBtn $w={72}>跨图层选择</StatusBtn>
          <StatusBtn $w={61}>折线选择</StatusBtn>
        </StatusBtns>
        <StatusCell $w={80} $ml={7}>请选择图元</StatusCell>
        <Fps>19.6078 FPS</Fps>
      </Status>

      <Taskbar>
        <StartBtn><FaWindows size={19} /></StartBtn>
        <TaskSearch>
          <Ring />
          在这里输入你要搜索的内容
          <MicSlot><Mic size={17} color="#222" /></MicSlot>
        </TaskSearch>
        <TaskSlot $w={51}>
          <Svg w={16} h={16}><path d="M0 3h3v10H0zM5 1h11v3H5zM5 6h11v4H5zM5 12h11v3H5z" stroke="#fff" /></Svg>
        </TaskSlot>
        <TaskSlot><FaEdge size={24} color="#1a78e0" /></TaskSlot>
        <TaskSlot>
          <Svg w={22} h={24}><path d="M1 2h20v20H1z" fill="#fce08a" /><path d="M1 2h20v5H1z" fill="#e8c050" /><path d="M7 22v-7h8v7z" fill="#38a0e8" /></Svg>
        </TaskSlot>
        <TaskSlot>
          <Svg w={22} h={26}><path d="M2 8h18v17H2z" fill="#fff" /><path d="M7 8V4a4 4 0 0 1 8 0v4" stroke="#fff" strokeWidth="1.5" /><rect x="6" y="11" width="4.500" height="4.500" fill="#f25022" /><rect x="11.500" y="11" width="4.500" height="4.500" fill="#7fba00" /><rect x="6" y="16.500" width="4.500" height="4.500" fill="#00a4ef" /><rect x="11.500" y="16.500" width="4.500" height="4.500" fill="#ffb900" /></Svg>
        </TaskSlot>
        <TaskSlot>
          <Svg w={24} h={22}><path d="M1 8L12 1l11 7v13H1z" fill="#fff" /><path d="M3 8l9 7 9-7" stroke="#0b1420" strokeWidth="1.4" /></Svg>
        </TaskSlot>
        <TaskSlot $w={46} $active $open><TaskApp>T</TaskApp></TaskSlot>
        <TaskSlot $w={6} />
        <TaskSlot $w={40} $open><CadApp><CadRing>CAD</CadRing></CadApp></TaskSlot>
        <Tray>
          <TrayItem $w={26}><Sogou>S</Sogou></TrayItem>
          <TrayItem $w={18}><HelpDot>?</HelpDot></TrayItem>
          <TrayItem $w={40} $ml={31}><Users size={16} /></TrayItem>
          <TrayItem $w={22} $ml={27}><ChevronUp size={14} /></TrayItem>
          <TrayItem $w={26}><BatteryCharging size={15} /></TrayItem>
          <TrayItem $w={22}><Wifi size={15} /></TrayItem>
          <TrayItem $w={24}><Volume2 size={15} /></TrayItem>
          <TrayItem $w={24} $fs={13}>中</TrayItem>
          <TrayItem $w={33}><Sogou>S</Sogou></TrayItem>
          <Clock>10:14<br />2019/6/23</Clock>
          <TrayItem $w={13} />
          <Notice><Badge>4</Badge></Notice>
        </Tray>
      </Taskbar>
    </Page>
  );
}
